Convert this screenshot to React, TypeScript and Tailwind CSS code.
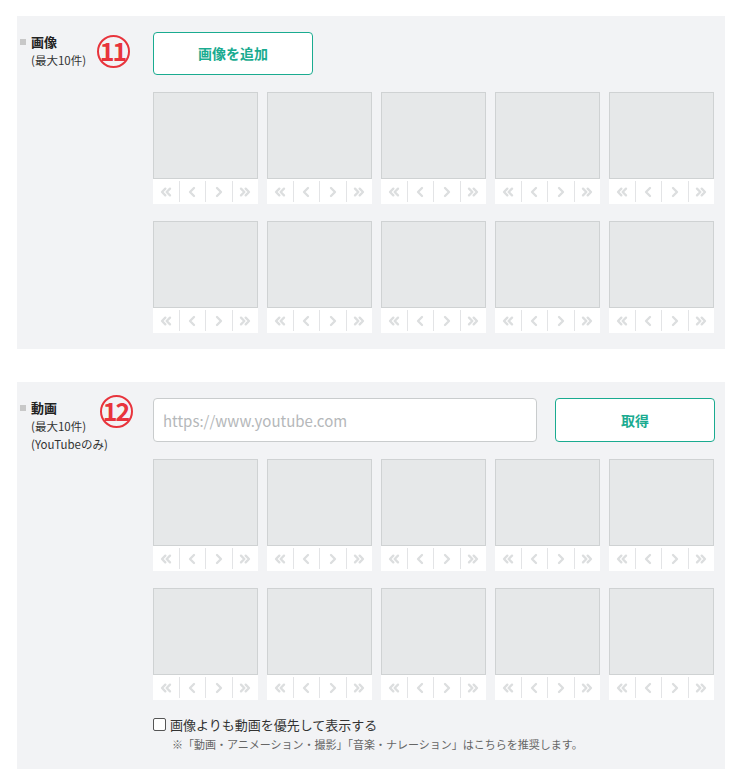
import React from "react";
import { ChevronsLeft, ChevronLeft, ChevronRight, ChevronsRight } from "lucide-react";

const font = { fontFamily: '"Noto Sans CJK JP", "Noto Sans", sans-serif' };

function Badge({ n }: { n: string }) {
  return (
    <div className="w-[33px] h-[33px] rounded-full border-2 border-[#e8343c] flex items-center justify-center text-[#e8343c] font-bold text-[25px] leading-none tracking-[-2px]">
      <span className="-mt-[2px] -ml-[2px]">{n}</span>
    </div>
  );
}

function Thumb() {
  const icons = [ChevronsLeft, ChevronLeft, ChevronRight, ChevronsRight];
  return (
    <div className="flex flex-col w-[105px]">
      <div className="h-[87px] bg-[#e6e8e9] border border-[#cfd2d3]" />
      <div className="h-[25px] bg-white flex items-center">
        {icons.map((Icon, i) => (
          <div
            key={i}
            className={`flex-1 h-[21px] flex items-center justify-center ${
              i > 0 ? "border-l border-[#e3e4e6]" : ""
            }`}
          >
            <Icon size={16} strokeWidth={3.5} color="#dcdedf" />
          </div>
        ))}
      </div>
    </div>
  );
}

function Grid() {
  return (
    <div className="flex flex-col gap-[17px]">
      {[0, 1].map((r) => (
        <div key={r} className="flex gap-[9px]">
          {[0, 1, 2, 3, 4].map((c) => (
            <Thumb key={c} />
          ))}
        </div>
      ))}
    </div>
  );
}

function Label({ title, lines, n, badgeTop }: { title: string; lines: string[]; n: string; badgeTop: string }) {
  return (
    <div className="w-[136px] shrink-0 flex pl-[3px]">
      <div className="flex flex-col w-[77px]">
        <div className="flex items-center gap-[5px] mt-[17px]">
          <span className="w-[6px] h-[6px] bg-[#c8c8c8]" />
          <span className="text-[13px] font-bold text-[#222] leading-[18px]">{title}</span>
        </div>
        {lines.map((l) => (
          <span key={l} className="text-[11.5px] text-[#333] leading-[17px] pl-[11px] mt-[1px] whitespace-nowrap">
            {l}
          </span>
        ))}
      </div>
      <div className={badgeTop}>
        <Badge n={n} />
      </div>
    </div>
  );
}

export default function App() {
  return (
    <div className="bg-white w-[741px] min-h-[783px] pt-[16px] pl-[17px]" style={font}>
      {/* 画像 */}
      <section className="w-[708px] h-[333px] bg-[#f2f3f5] flex">
        <Label title="画像" lines={["(最大10件)"]} n="11" badgeTop="mt-[19px]" />
        <div className="flex flex-col pt-[16px]">
          <button className="w-[160px] h-[43px] bg-white border border-[#1aab90] rounded-[4px] text-[#1aab90] font-bold text-[14px] mb-[17px]">
            画像を追加
          </button>
          <Grid />
        </div>
      </section>

      {/* 動画 */}
      <section className="w-[708px] h-[387px] mt-[33px] bg-[#f2f3f5] flex">
        <Label title="動画" lines={["(最大10件)", "(YouTubeのみ)"]} n="12" badgeTop="mt-[13px] ml-[3px]" />
        <div className="flex flex-col pt-[16px]">
          <div className="flex gap-[18px] mb-[17px]">
            <input
              className="w-[384px] h-[44px] bg-white border border-[#c9cccd] rounded-[4px] px-[9px] text-[15px] placeholder:text-[#b5b8ba] outline-none"
              placeholder="https://www.youtube.com"
            />
            <button className="w-[160px] h-[44px] bg-white border border-[#1aab90] rounded-[4px] text-[#1aab90] font-bold text-[14px]">
              取得
            </button>
          </div>
          <Grid />
          <label className="flex items-center gap-[4px] mt-[15px] text-[13px] text-[#333]">
            <span className="w-[13px] h-[13px] border border-[#555] rounded-[2px] bg-white" />
            画像よりも動画を優先して表示する
          </label>
          <p className="text-[11px] text-[#666] pl-[19px] mt-[1px] whitespace-nowrap">
            ※「動画・アニメーション・撮影」「音楽・ナレーション」はこちらを推奨します。
          </p>
        </div>
      </section>
    </div>
  );
}
